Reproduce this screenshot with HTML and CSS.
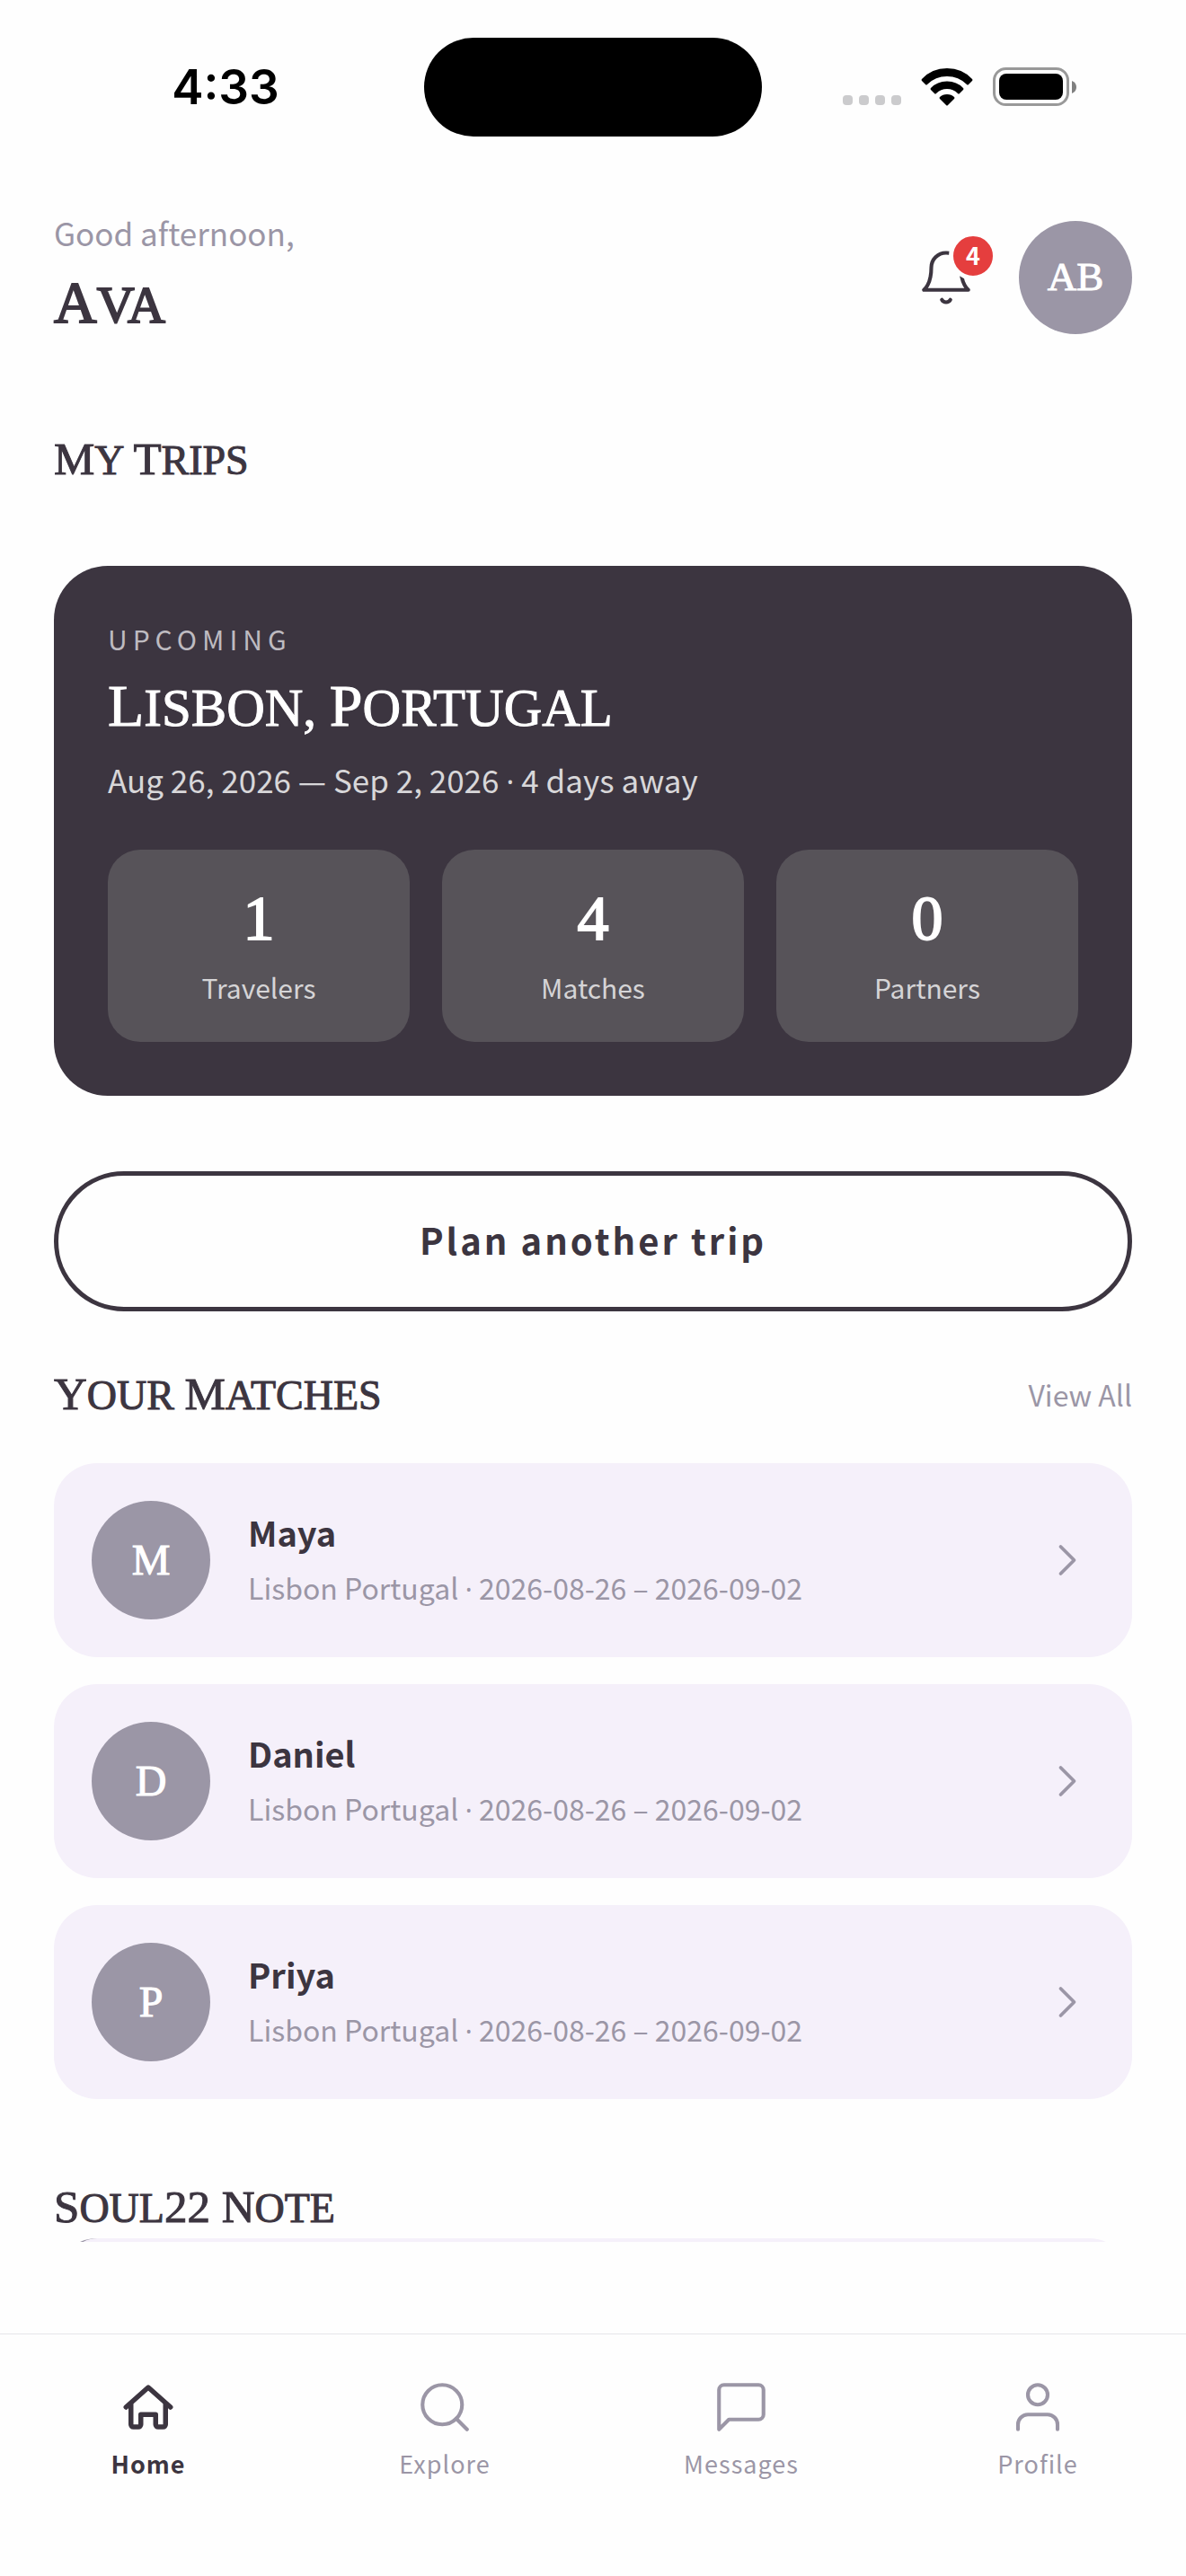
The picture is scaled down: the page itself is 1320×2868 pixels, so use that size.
FILE: index.html
```html
<!DOCTYPE html>
<html lang="en">
<head>
    <meta charset="UTF-8">
    <meta name="viewport" content="width=device-width, initial-scale=1.0">
    <title>My Trips</title>
    <link rel="stylesheet" href="styles.css">
</head>
<body>
    <div class="status-bar">
        <div class="status-side"><span class="clock">4:33</span></div>
        <div class="island"></div>
        <div class="status-side status-icons">
            <div class="signal"><i></i><i></i><i></i><i></i></div>
            <svg class="wifi" viewBox="0 0 58 42" aria-hidden="true">
                <path d="M1 12Q12 0 29 0T57 12Q58 13 57 14L53 18Q52 19 51 18Q42 9 29 9T7 18Q6 19 5 18L1 14Q0 13 1 12Z"/>
                <path d="M11 22Q18 14.5 29 14.5T47 22Q48 23 47 24L43 28Q42 29 41 28Q36 23 29 23T17 28Q16 29 15 28L11 24Q10 23 11 22Z"/>
                <path d="M21 32Q24 29 29 29T37 32Q38 33 37 34L30 41Q29 42 28 41L21 34Q20 33 21 32Z"/>
            </svg>
            <svg class="battery" viewBox="0 0 94 44" aria-hidden="true">
                <rect x="1.5" y="1.5" width="82" height="40" rx="13" fill="none" stroke="#999" stroke-width="3"/>
                <rect x="7" y="7" width="71" height="29" rx="8" fill="#000"/>
                <path d="M88 15q5 2 5 7t-5 7z" fill="#808080"/>
            </svg>
        </div>
    </div>

    <main class="content">
        <header class="header">
            <div class="greeting">
                <p class="hello">Good afternoon,</p>
                <h1 class="name"><span class="cap">A</span>va</h1>
            </div>
            <div class="header-actions">
                <button class="bell" aria-label="Notifications">
                    <svg class="icon" viewBox="0 0 24 24" aria-hidden="true">
                        <path d="M18 8A6 6 0 0 0 6 8c0 7-3 9-3 9h18s-3-2-3-9"/>
                        <path d="M13.73 21a2 2 0 0 1-3.46 0"/>
                    </svg>
                    <span class="badge">4</span>
                </button>
                <button class="avatar avatar-user">AB</button>
            </div>
        </header>

        <h2 class="section-title"><span class="cap">M</span>y <span class="cap">T</span>rips</h2>

        <section class="trip-card">
            <p class="trip-label">UPCOMING</p>
            <h3 class="trip-place"><span class="cap">L</span>isbon, <span class="cap">P</span>ortugal</h3>
            <p class="trip-dates">Aug 26, 2026 — Sep 2, 2026 <span class="dot">·</span> 4 days away</p>
            <div class="stats">
                <div class="stat">
                    <span class="stat-value">1</span>
                    <span class="stat-label">Travelers</span>
                </div>
                <div class="stat">
                    <span class="stat-value">4</span>
                    <span class="stat-label">Matches</span>
                </div>
                <div class="stat">
                    <span class="stat-value">0</span>
                    <span class="stat-label">Partners</span>
                </div>
            </div>
        </section>

        <button class="plan-button">Plan another trip</button>

        <div class="section-head">
            <h2 class="section-title"><span class="cap">Y</span>our <span class="cap">M</span>atches</h2>
            <a class="view-all" href="#">View All</a>
        </div>

        <div class="matches">
            <a class="match" href="#">
                <span class="avatar">M</span>
                <span class="match-info">
                    <span class="match-name">Maya</span>
                    <span class="match-trip">Lisbon Portugal <span class="dot">·</span> 2026-08-26 – 2026-09-02</span>
                </span>
                <svg class="chevron" viewBox="0 0 24 24" aria-hidden="true"><path d="M9 18l6-6-6-6"/></svg>
            </a>
            <a class="match" href="#">
                <span class="avatar">D</span>
                <span class="match-info">
                    <span class="match-name">Daniel</span>
                    <span class="match-trip">Lisbon Portugal <span class="dot">·</span> 2026-08-26 – 2026-09-02</span>
                </span>
                <svg class="chevron" viewBox="0 0 24 24" aria-hidden="true"><path d="M9 18l6-6-6-6"/></svg>
            </a>
            <a class="match" href="#">
                <span class="avatar">P</span>
                <span class="match-info">
                    <span class="match-name">Priya</span>
                    <span class="match-trip">Lisbon Portugal <span class="dot">·</span> 2026-08-26 – 2026-09-02</span>
                </span>
                <svg class="chevron" viewBox="0 0 24 24" aria-hidden="true"><path d="M9 18l6-6-6-6"/></svg>
            </a>
        </div>

        <h2 class="section-title note-title"><span class="cap">S</span>oul<span class="cap">22 N</span>ote</h2>
        <div class="note-card"></div>
    </main>

    <nav class="tab-bar">
        <a class="tab active" href="#">
            <svg class="icon" viewBox="0 0 24 24" aria-hidden="true">
                <path d="M3 12l9-8 9 8"/>
                <path d="M5 11v8a1 1 0 0 0 1 1h2a1 1 0 0 0 1-1v-4h6v4a1 1 0 0 0 1 1h2a1 1 0 0 0 1-1v-8"/>
            </svg>
            <span>Home</span>
        </a>
        <a class="tab" href="#">
            <svg class="icon" viewBox="0 0 24 24" aria-hidden="true">
                <circle cx="11" cy="11" r="8"/>
                <path d="M21 21l-4.35-4.35"/>
            </svg>
            <span>Explore</span>
        </a>
        <a class="tab" href="#">
            <svg class="icon" viewBox="0 0 24 24" aria-hidden="true">
                <path d="M21 15a2 2 0 0 1-2 2H7l-4 4V5a2 2 0 0 1 2-2h14a2 2 0 0 1 2 2z"/>
            </svg>
            <span>Messages</span>
        </a>
        <a class="tab" href="#">
            <svg class="icon" viewBox="0 0 24 24" aria-hidden="true">
                <path d="M20 21v-2a4 4 0 0 0-4-4H8a4 4 0 0 0-4 4v2"/>
                <circle cx="12" cy="7" r="4"/>
            </svg>
            <span>Profile</span>
        </a>
    </nav>
</body>
</html>
```

FILE: styles.css
```css
* {
    box-sizing: border-box;
    margin: 0;
    padding: 0;
}

body {
    display: flex;
    flex-direction: column;
    height: 100vh;
    background-color: #fefefe;
    color: #3c3540;
    font-family: "Noto Sans CJK SC", "Open Sans", sans-serif;
    overflow: hidden;
}

a {
    color: inherit;
    text-decoration: none;
}

button {
    border: none;
    background: none;
    color: inherit;
    font-family: inherit;
    cursor: pointer;
}

/* the CJK face draws a full-width middle dot */
.dot {
    font-family: "Open Sans", sans-serif;
    line-height: 1;
}

/* Status bar */
.status-bar {
    display: grid;
    grid-template-columns: 1fr auto 1fr;
    flex-shrink: 0;
    height: 186px;
    padding-top: 42px;
    align-items: start;
}

.status-side {
    display: flex;
    height: 110px;
    align-items: center;
    justify-content: center;
}

.clock {
    padding-left: 30px;
    color: #000;
    font-family: Inter, sans-serif;
    font-size: 53px;
    font-weight: 600;
}

.island {
    width: 376px;
    height: 110px;
    border-radius: 55px;
    background-color: #000;
}

.status-icons {
    justify-content: flex-end;
    padding-right: 121px;
}

.signal {
    display: flex;
    gap: 7px;
    padding-top: 29px;
    margin-right: 22px;
}

.signal i {
    width: 11px;
    height: 11px;
    border-radius: 4px;
    background-color: #cbcbcd;
}

.wifi {
    width: 58px;
    height: 42px;
    margin-right: 22px;
}

.battery {
    width: 94px;
    height: 44px;
}

/* Scrolling content */
.content {
    flex: 1;
    min-height: 0;
    padding: 48px 60px 0;
    margin-bottom: 102px;
    overflow: hidden;
}

.header {
    display: flex;
    align-items: center;
    justify-content: space-between;
    margin-bottom: 99px;
}

.hello {
    margin-bottom: 12px;
    color: #9b96a6;
    font-size: 35px;
    line-height: 50px;
}

.name,
.section-title,
.trip-place {
    font-family: "Liberation Serif", serif;
    font-weight: 400;
    text-transform: uppercase;
    -webkit-text-stroke: 1px currentColor;
}

.cap {
    line-height: 1;
}

.name {
    font-size: 58px;
    line-height: 88px;
    -webkit-text-stroke-width: 2px;
}

.name .cap {
    font-size: 66px;
}

.section-title {
    font-size: 46px;
    line-height: 60px;
}

.section-title .cap {
    font-size: 51px;
}

.header-actions {
    display: flex;
    align-items: center;
    gap: 48px;
}

.bell {
    position: relative;
    display: flex;
}

.icon {
    width: 66px;
    height: 66px;
    fill: none;
    stroke: currentColor;
    stroke-width: 1.5;
    stroke-linecap: round;
    stroke-linejoin: round;
}

.badge {
    position: absolute;
    top: -18px;
    right: -24px;
    width: 54px;
    height: 54px;
    border: 5px solid #fefefe;
    border-radius: 50%;
    background-color: #e53e3e;
    color: #fff;
    font-size: 27px;
    font-weight: 700;
    line-height: 42px;
    text-align: center;
}

.avatar {
    display: flex;
    flex-shrink: 0;
    align-items: center;
    justify-content: center;
    width: 132px;
    height: 132px;
    padding-bottom: 2px;
    border-radius: 50%;
    background-color: #9b96a6;
    color: #fff;
    font-family: "Liberation Serif", serif;
    font-size: 48px;
    -webkit-text-stroke: 1px currentColor;
}

.avatar-user {
    width: 126px;
    height: 126px;
    font-size: 45px;
}

/* Trip card */
.trip-card {
    display: flex;
    flex-direction: column;
    gap: 16px;
    margin: 87px 0 84px;
    padding: 60px;
    border-radius: 60px;
    background-color: #3c3540;
    color: #fff;
}

.trip-label {
    color: #bebbc0;
    font-size: 30px;
    letter-spacing: 6px;
    line-height: 42px;
}

.trip-place {
    font-size: 59px;
    line-height: 80px;
}

.trip-place .cap {
    font-size: 66px;
}

.trip-dates {
    color: #d8d7d9;
    font-size: 35px;
    line-height: 48px;
}

.stats {
    display: flex;
    gap: 36px;
    margin-top: 38px;
}

.stat {
    display: flex;
    flex: 1;
    flex-direction: column;
    align-items: center;
    gap: 10px;
    padding: 36px 24px;
    border-radius: 36px;
    background-color: #575359;
}

.stat-value {
    font-family: "Liberation Serif", serif;
    font-size: 70px;
    line-height: 82px;
    -webkit-text-stroke: 2px currentColor;
}

.stat-label {
    color: #d5d4d6;
    font-size: 30px;
    line-height: 50px;
}

.plan-button {
    display: block;
    width: 100%;
    height: 156px;
    padding-bottom: 4px;
    border: 5px solid #3c3540;
    border-radius: 78px;
    font-size: 40px;
    font-weight: 700;
    letter-spacing: 3px;
}

/* Matches */
.section-head {
    display: flex;
    align-items: center;
    justify-content: space-between;
    margin: 64px 0 45px;
}

.view-all {
    padding-bottom: 4px;
    color: #9b96a6;
    font-size: 32px;
    line-height: 48px;
}

.matches {
    display: flex;
    flex-direction: column;
    gap: 30px;
}

.match {
    display: flex;
    align-items: center;
    gap: 42px;
    padding: 42px;
    border-radius: 48px;
    background-color: #f5f0fa;
}

.match-info {
    display: flex;
    flex: 1;
    flex-direction: column;
    gap: 10px;
    padding-bottom: 4px;
}

.match-name {
    font-size: 38px;
    font-weight: 700;
    line-height: 54px;
}

.match-trip {
    color: #9b96a6;
    font-size: 32px;
    line-height: 48px;
}

.chevron {
    width: 60px;
    height: 60px;
    fill: none;
    stroke: #9b96a6;
    stroke-width: 1.5;
    stroke-linecap: round;
    stroke-linejoin: round;
}

.note-title {
    margin-top: 92px;
}

.note-card {
    height: 300px;
    margin-top: 3px;
    border-left: 9px solid #9b96a6;
    border-radius: 48px;
    background-color: #f5f0fa;
}

/* Tab bar */
.tab-bar {
    display: flex;
    flex-shrink: 0;
    height: 270px;
    padding-top: 48px;
    border-top: 1px solid #e5e5e9;
}

.tab {
    display: flex;
    flex: 1;
    flex-direction: column;
    align-items: center;
    gap: 10px;
    color: #9b96a6;
    font-size: 27px;
    letter-spacing: 1px;
    line-height: 40px;
}

.tab.active {
    color: #3c3540;
    font-weight: 700;
}

.tab.active .icon {
    stroke-width: 2;
}
```
